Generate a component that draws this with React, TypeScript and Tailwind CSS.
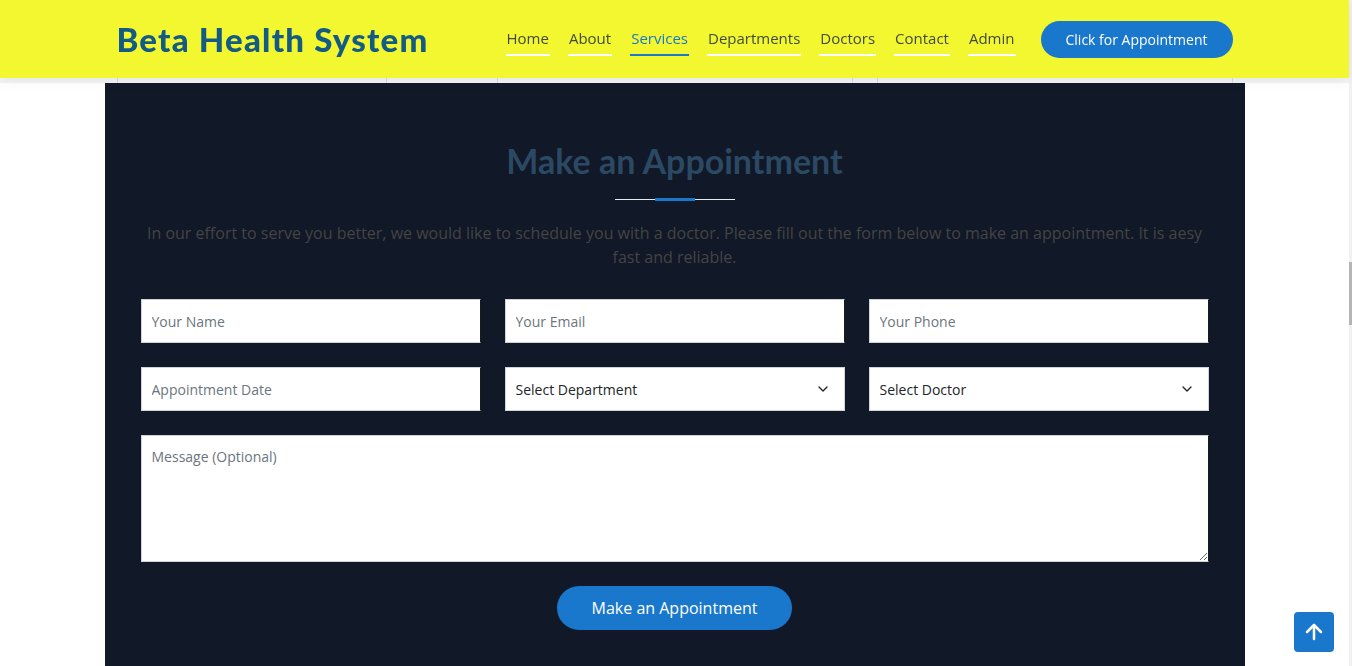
import { ArrowUp, ChevronDown } from 'lucide-react'

const navLinks = ['Home', 'About', 'Services', 'Departments', 'Doctors', 'Contact', 'Admin']

const stripCols = ['w-[269px]', 'w-[111px]', 'w-[355px]', 'w-[25px]', 'w-[356px]']

function TextField({ placeholder }: { placeholder: string }) {
  return (
    <input
      type="text"
      placeholder={placeholder}
      className="h-[44px] w-full border border-[#ced4da] border-r-[#1b1b1b] bg-white px-[10px] text-[14px] text-[#212529] outline-none placeholder:text-[#6c757d]"
    />
  )
}

function SelectField({ label }: { label: string }) {
  return (
    <div className="relative">
      <select className="h-[44px] w-full appearance-none border border-[#ced4da] bg-white px-[10px] text-[14px] text-[#212529] outline-none">
        <option>{label}</option>
      </select>
      <ChevronDown
        className="pointer-events-none absolute right-[14px] top-1/2 h-4 w-4 -translate-y-1/2 text-[#212529]"
        strokeWidth={2}
      />
    </div>
  )
}

export default function App() {
  return (
    <div className="relative h-screen overflow-hidden bg-white font-['Open_Sans',sans-serif]">
      <div className="mr-[3px]">
        <header className="relative z-10 h-[78px] bg-[#f2f72f] shadow-[0_2px_12px_rgba(0,0,0,0.08)]">
          <div className="mx-auto flex h-full max-w-[1140px] items-center justify-between px-3">
            <a
              href="#top"
              className="font-['Lato',sans-serif] text-[33px] font-black leading-none tracking-[1.2px] text-[#135a85]"
            >
              Beta Health System
            </a>

            <div className="flex items-center gap-[25px]">
              <nav className="flex items-center gap-[18px] pt-[6px]" aria-label="Primary">
                {navLinks.map((l) => (
                  <a
                    key={l}
                    href="#"
                    className={`border-b-2 px-px pb-[6px] text-[15px] leading-[20px] ${
                      l === 'Services' ? 'border-[#1977cc] text-[#1977cc]' : 'border-white text-[#3f4a3c]'
                    }`}
                  >
                    {l}
                  </a>
                ))}
              </nav>
              <a
                href="#appointment"
                className="flex h-[37px] items-center rounded-full bg-[#1977cc] px-[25px] text-[14px] font-medium text-white"
              >
                Click for Appointment
              </a>
            </div>
          </div>
        </header>

        {/* edge of the table that sits behind the header */}
        <div className="h-[5px] bg-[#f4f5f6]">
          <div className="mx-auto flex h-full max-w-[1116px]">
            {stripCols.map((w, i) => (
              <div key={i} className={`${w} h-full border-l border-[#dcdcdc] ${i === 4 ? 'border-r' : ''}`} />
            ))}
          </div>
        </div>

        <section id="appointment" className="mx-auto max-w-[1140px] bg-[#111827] px-9 pb-[60px] pt-[60px]">
          <h2 className="text-center font-['Lato',sans-serif] text-[34px] font-bold leading-[36px] text-[#2c4964]">
            Make an Appointment
          </h2>
          <div className="mt-[19px] flex justify-center">
            <div className="relative flex h-[3px] w-[120px] items-center">
              <div className="h-px w-full bg-[#e6e9ee]" />
              <div className="absolute left-[40px] h-[3px] w-[40px] bg-[#1977cc]" />
            </div>
          </div>
          <p className="mt-[20px] text-center text-[16px] leading-[24px] text-[#444444]">
            In our effort to serve you better, we would like to schedule you with a doctor. Please fill out the form
            below to make an appointment. It is aesy fast and reliable.
          </p>

          <form className="mt-[30px] flex flex-col gap-6" onSubmit={(e) => e.preventDefault()}>
            <div className="grid grid-cols-3 gap-6">
              <TextField placeholder="Your Name" />
              <TextField placeholder="Your Email" />
              <TextField placeholder="Your Phone" />
            </div>
            <div className="grid grid-cols-3 gap-6">
              <input
                type="text"
                placeholder="Appointment Date"
                className="h-[44px] w-full border border-[#ced4da] border-r-[#1b1b1b] bg-white px-[10px] text-[14px] outline-none placeholder:text-[#6c757d]"
              />
              <SelectField label="Select Department" />
              <SelectField label="Select Doctor" />
            </div>
            <textarea
              placeholder="Message (Optional)"
              className="block h-[127px] w-full border border-[#ced4da] border-r-[#1b1b1b] bg-white px-[10px] pt-[11px] text-[14px] leading-[20px] outline-none placeholder:text-[#6c757d]"
            />
            <div className="flex justify-center">
              <button
                type="submit"
                className="h-[44px] rounded-full bg-[#1977cc] px-[35px] text-[16px] text-white"
              >
                Make an Appointment
              </button>
            </div>
          </form>
        </section>
      </div>

      {/* thin scrollbar */}
      <div className="fixed right-0 top-0 h-full w-[3px] bg-[#f1f1f1]">
        <div className="mt-[262px] h-[63px] w-full bg-[#b5b5b5]" />
      </div>

      <a
        href="#top"
        aria-label="Back to top"
        className="fixed bottom-[14px] right-[18px] grid h-10 w-10 place-items-center rounded-[4px] bg-[#1977cc] text-white"
      >
        <ArrowUp className="h-6 w-6" strokeWidth={2.5} />
      </a>
    </div>
  )
}
